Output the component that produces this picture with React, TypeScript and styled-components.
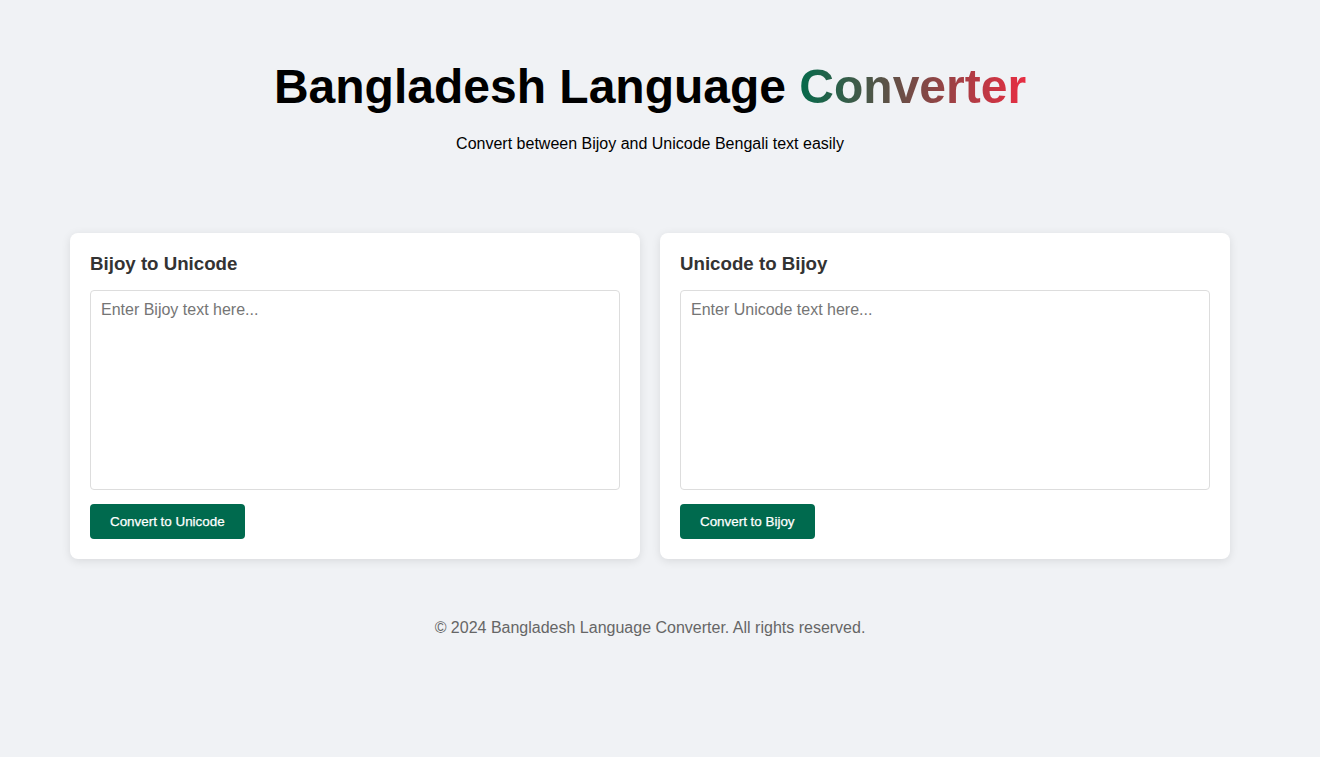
import React from "react";
import styled, { createGlobalStyle } from "styled-components";

const Global = createGlobalStyle`
  * { box-sizing: border-box; }
  html, body { margin: 0; padding: 0; background: #f0f2f5; }
  body { font-family: "Liberation Sans", Arial, sans-serif; color: #000; }
`;

const Page = styled.div`
  min-height: 757px;
  padding-right: 20px;
`;

const Header = styled.header`
  text-align: center;
  padding-top: 59px;
`;

const Title = styled.h1`
  margin: 0;
  font-size: 48px;
  font-weight: 700;
  line-height: 55px;
  color: #000;
`;

const Gradient = styled.span`
  background: linear-gradient(90deg, #056a4b, #e82d42);
  -webkit-background-clip: text;
  background-clip: text;
  color: transparent;
`;

const Subtitle = styled.p`
  margin: 21px 0 0;
  font-size: 16px;
  line-height: 18px;
`;

const Grid = styled.main`
  width: 1160px;
  margin: 80px auto 0;
  display: grid;
  grid-template-columns: 1fr 1fr;
  gap: 20px;
`;

const Card = styled.section`
  background: #fff;
  border-radius: 8px;
  box-shadow: 0 2px 10px rgba(0, 0, 0, 0.1);
  padding: 20px;
  display: flex;
  flex-direction: column;
  align-items: flex-start;
`;

const CardTitle = styled.h2`
  margin: 0 0 15px;
  font-size: 18.7px;
  line-height: 22px;
  font-weight: 700;
  color: #333;
`;

const TextArea = styled.textarea`
  width: 100%;
  height: 200px;
  padding: 10px;
  border: 1px solid #ddd;
  border-radius: 4px;
  font-family: "Liberation Sans", Arial, sans-serif;
  font-size: 16px;
  line-height: 18px;
  resize: none;
  outline: none;
  &::placeholder { color: #757575; }
`;

const Button = styled.button`
  margin-top: 14px;
  background: #006a4e;
  color: #fff;
  border: none;
  border-radius: 4px;
  padding: 0 20px;
  height: 35px;
  font-family: "Liberation Sans", Arial, sans-serif;
  font-size: 13.4px;
  font-weight: 400;
  -webkit-text-stroke: 0.25px #fff;
  cursor: pointer;
`;

const Footer = styled.footer`
  text-align: center;
  margin-top: 60px;
  color: #666;
  font-size: 16px;
  line-height: 18px;
`;

export default function App() {
  return (
    <Page>
      <Global />
      <Header>
        <Title>
          Bangladesh Language <Gradient>Converter</Gradient>
        </Title>
        <Subtitle>Convert between Bijoy and Unicode Bengali text easily</Subtitle>
      </Header>
      <Grid>
        <Card>
          <CardTitle>Bijoy to Unicode</CardTitle>
          <TextArea placeholder="Enter Bijoy text here..." />
          <Button>Convert to Unicode</Button>
        </Card>
        <Card>
          <CardTitle>Unicode to Bijoy</CardTitle>
          <TextArea placeholder="Enter Unicode text here..." />
          <Button>Convert to Bijoy</Button>
        </Card>
      </Grid>
      <Footer>© 2024 Bangladesh Language Converter. All rights reserved.</Footer>
    </Page>
  );
}
